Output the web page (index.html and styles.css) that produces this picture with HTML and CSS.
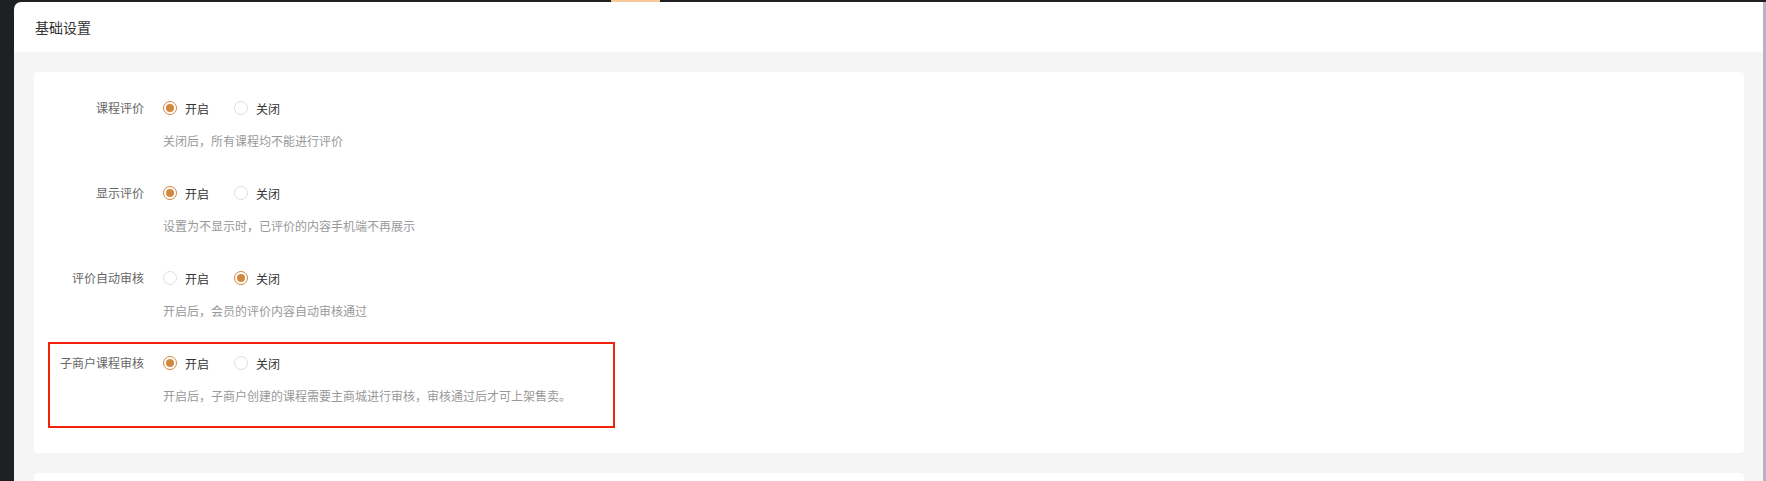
FILE: index.html
```html
<!DOCTYPE html>
<html lang="zh-CN">
<head>
    <meta charset="UTF-8">
    <meta name="viewport" content="width=device-width, initial-scale=1.0">
    <title>基础设置</title>
    <link rel="stylesheet" href="styles.css">
</head>
<body>
    <div class="topbar">
        <span class="topbar-tab"></span>
    </div>
    <div class="layout">
        <div class="sidebar"></div>
        <div class="main">
            <div class="page-header">基础设置</div>
            <div class="page-body">
                <div class="card">
                    <div class="form-item">
                        <div class="form-label">课程评价</div>
                        <div class="form-content">
                            <div class="radio-group">
                                <label class="radio is-checked"><span class="radio-inner"></span>开启</label>
                                <label class="radio"><span class="radio-inner"></span>关闭</label>
                            </div>
                            <div class="form-tip">关闭后，所有课程均不能进行评价</div>
                        </div>
                    </div>
                    <div class="form-item">
                        <div class="form-label">显示评价</div>
                        <div class="form-content">
                            <div class="radio-group">
                                <label class="radio is-checked"><span class="radio-inner"></span>开启</label>
                                <label class="radio"><span class="radio-inner"></span>关闭</label>
                            </div>
                            <div class="form-tip">设置为不显示时，已评价的内容手机端不再展示</div>
                        </div>
                    </div>
                    <div class="form-item">
                        <div class="form-label">评价自动审核</div>
                        <div class="form-content">
                            <div class="radio-group">
                                <label class="radio"><span class="radio-inner"></span>开启</label>
                                <label class="radio is-checked"><span class="radio-inner"></span>关闭</label>
                            </div>
                            <div class="form-tip">开启后，会员的评价内容自动审核通过</div>
                        </div>
                    </div>
                    <div class="highlight">
                        <div class="form-item">
                            <div class="form-label">子商户课程审核</div>
                            <div class="form-content">
                                <div class="radio-group">
                                    <label class="radio is-checked"><span class="radio-inner"></span>开启</label>
                                    <label class="radio"><span class="radio-inner"></span>关闭</label>
                                </div>
                                <div class="form-tip">开启后，子商户创建的课程需要主商城进行审核，审核通过后才可上架售卖。</div>
                            </div>
                        </div>
                    </div>
                </div>
                <div class="card card-next"></div>
            </div>
        </div>
    </div>
</body>
</html>
```

FILE: styles.css
```css
html, body {
    margin: 0;
    height: 100%;
    overflow: hidden;
}
body {
    background-color: #1f2024;
    font-family: "Noto Sans CJK SC", "Noto Sans", sans-serif;
    font-size: 12px;
    color: #333333;
}
.topbar {
    height: 2px;
    display: flex;
}
.topbar-tab {
    margin-left: 611px;
    width: 49px;
    height: 2px;
    background-color: #f9c89a;
}
.layout {
    display: flex;
    height: calc(100% - 2px);
}
.sidebar {
    width: 14px;
    flex-shrink: 0;
}
.main {
    flex: 1;
    background-color: #ffffff;
    border-top-left-radius: 7px;
    border-right: 3px solid #b5b3c8;
    overflow: hidden;
}
.page-header {
    height: 50px;
    line-height: 50px;
    padding-left: 21px;
    font-size: 14px;
    color: #333333;
}
.page-body {
    background-color: #f5f5f5;
    padding: 20px 19px 20px 20px;
    height: 100%;
}
.card {
    background-color: #ffffff;
    border-radius: 4px;
    padding: 20px 0 25px;
}
.card-next {
    margin-top: 20px;
    height: 60px;
    padding: 0;
}
.form-item {
    display: flex;
    margin-bottom: 26px;
}
.form-label {
    width: 110px;
    padding-right: 19px;
    text-align: right;
    line-height: 32px;
    color: #666666;
}
.form-content {
    flex: 1;
}
.radio-group {
    display: flex;
    height: 32px;
    align-items: center;
}
.radio {
    display: inline-flex;
    align-items: center;
    gap: 8px;
    margin-right: 25px;
    color: #333333;
    cursor: pointer;
}
.radio-inner {
    width: 14px;
    height: 14px;
    box-sizing: border-box;
    border: 1px solid #dcdfe6;
    border-radius: 50%;
    display: inline-flex;
    align-items: center;
    justify-content: center;
}
.radio.is-checked .radio-inner {
    border-color: #d0883f;
}
.radio.is-checked .radio-inner::after {
    content: "";
    width: 8px;
    height: 8px;
    border-radius: 50%;
    background-color: #d0883f;
}
.form-tip {
    margin-top: 7px;
    line-height: 20px;
    color: #999999;
}
.highlight {
    margin-left: 14px;
    margin-top: -5px;
    width: 567px;
    box-sizing: border-box;
    border: 2px solid #f3230b;
    padding: 3px 0 20px;
}
.highlight .form-item {
    margin-bottom: 0;
}
.highlight .form-label {
    width: 94px;
}
```
